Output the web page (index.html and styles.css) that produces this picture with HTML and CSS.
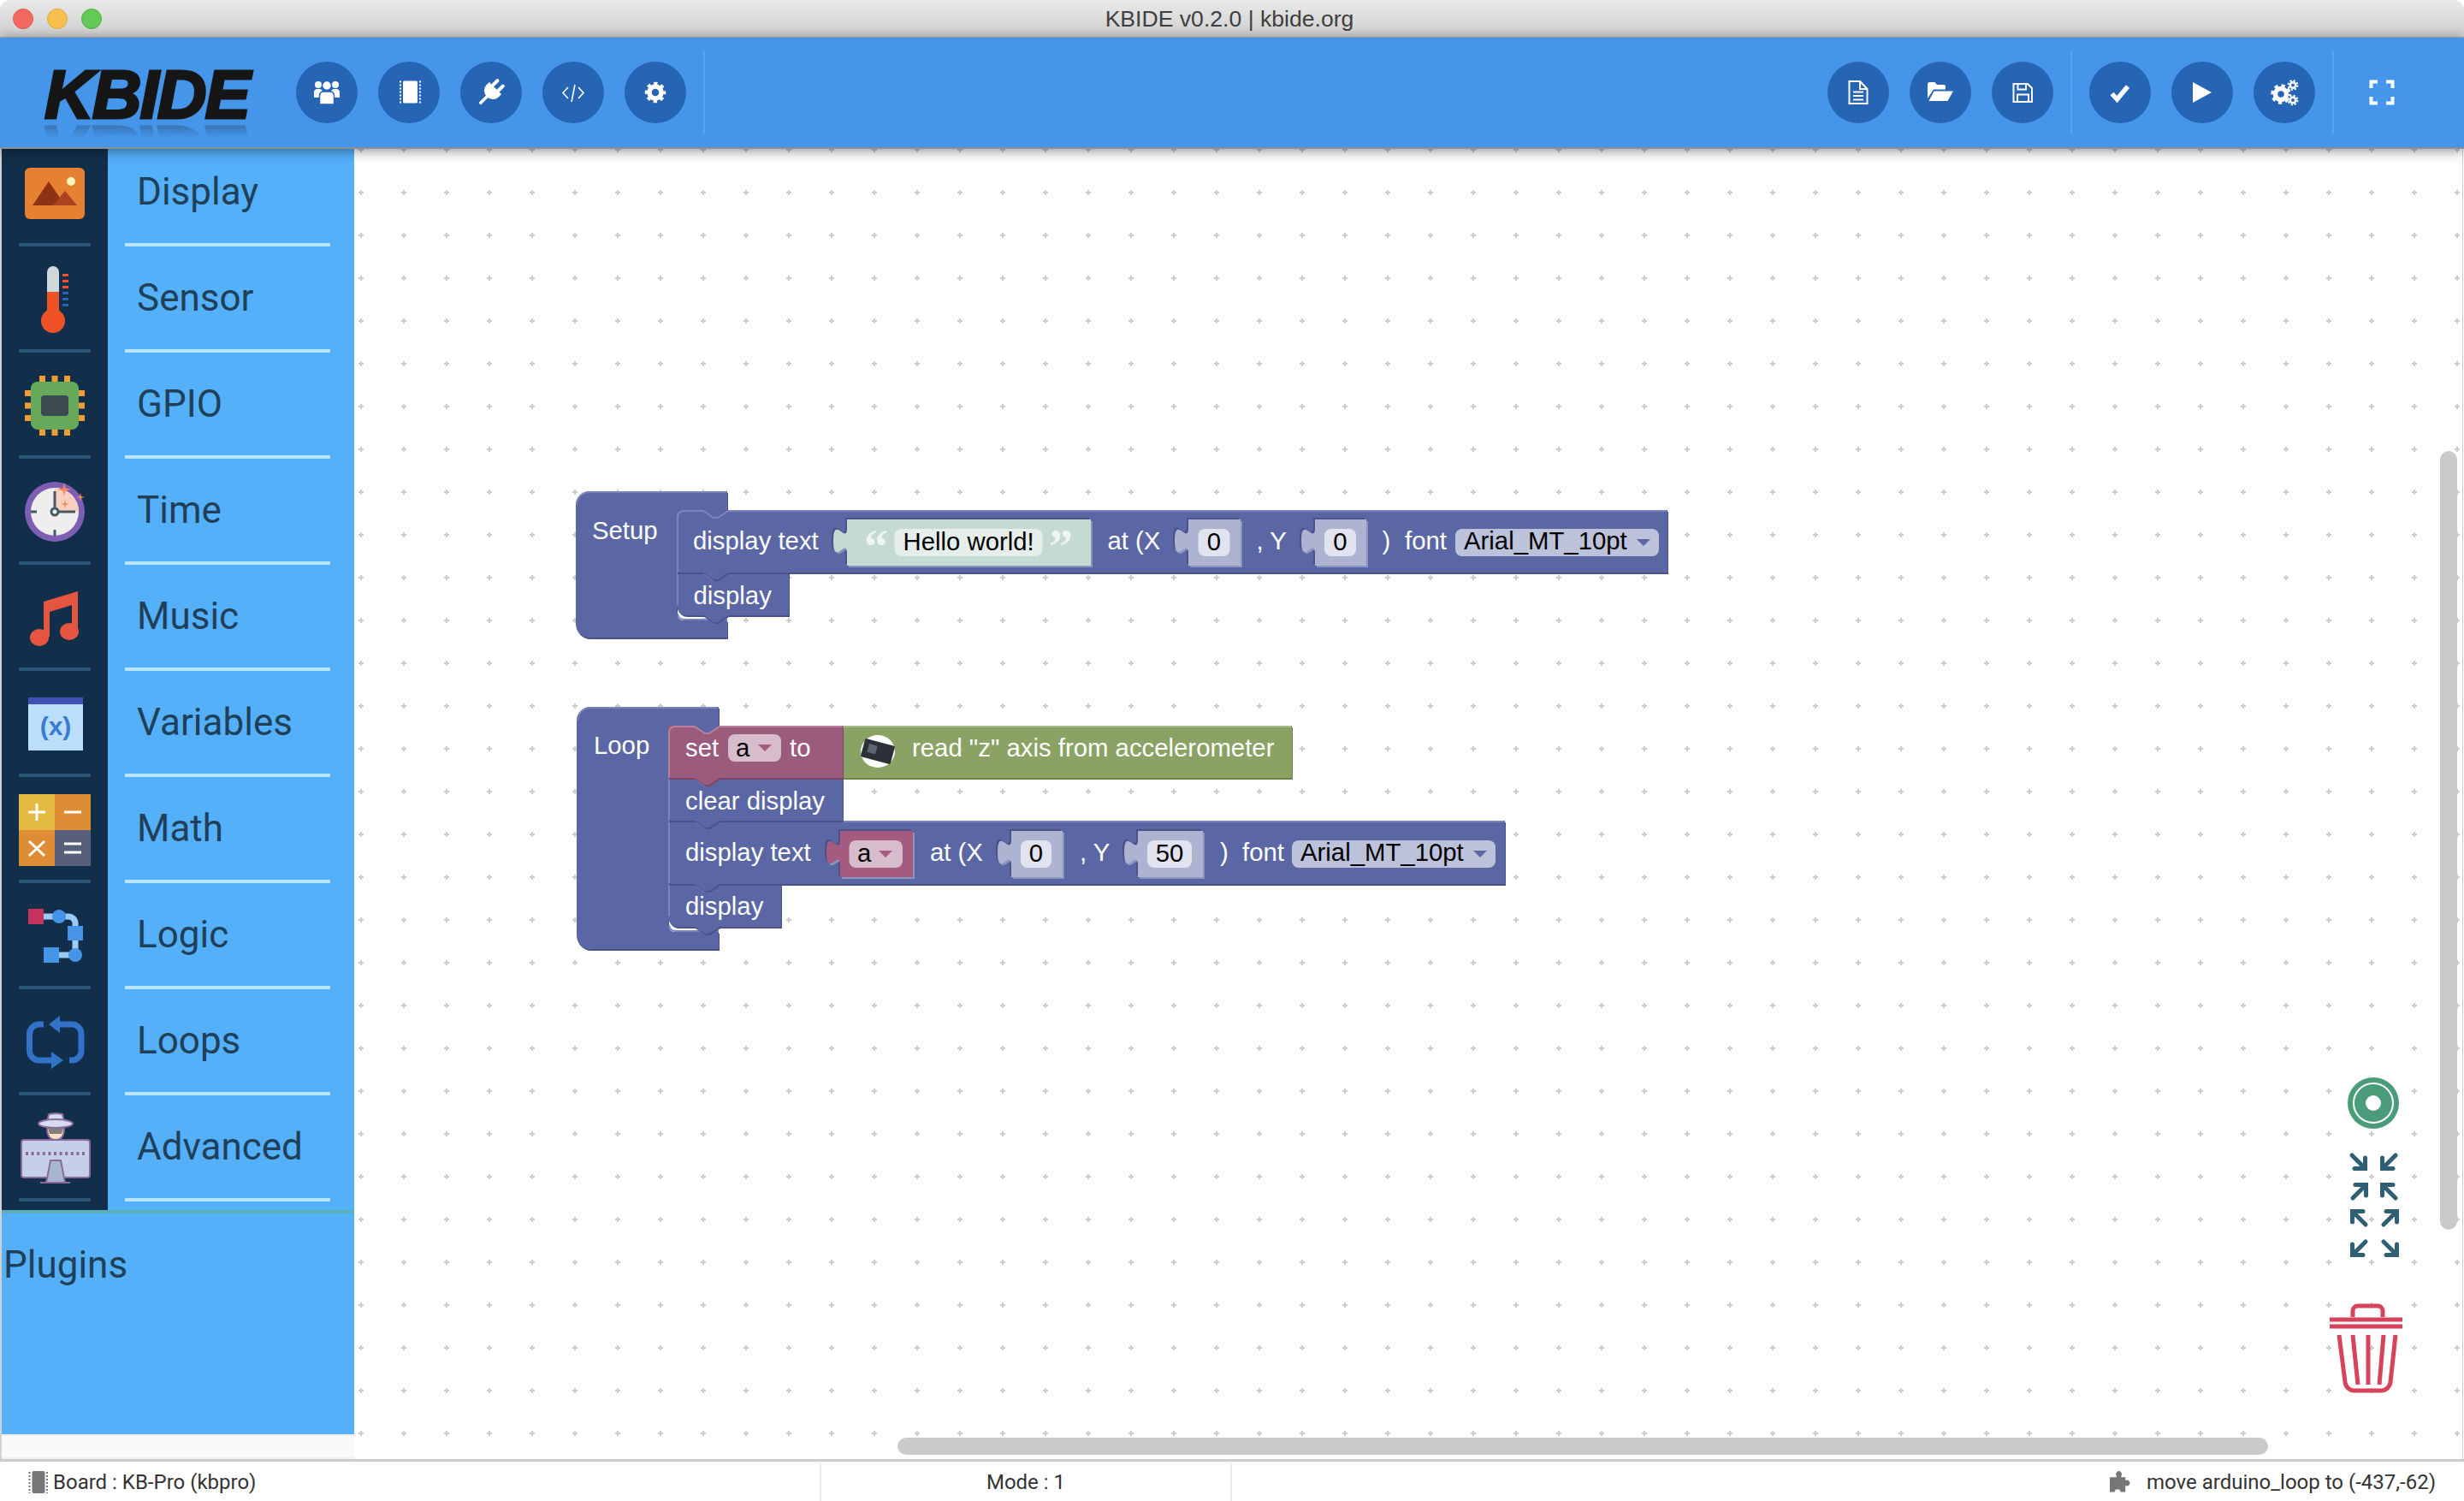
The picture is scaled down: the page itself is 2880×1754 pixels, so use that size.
FILE: index.html
```html
<!DOCTYPE html>
<html lang="en">
<head>
    <meta charset="UTF-8">
    <title>KBIDE v0.2.0 | kbide.org</title>
    <link rel="stylesheet" href="styles.css">
</head>
<body>
    <div class="titlebar">
        <div class="lights">
            <span class="light light-red"></span>
            <span class="light light-yellow"></span>
            <span class="light light-green"></span>
        </div>
        <div class="window-title">KBIDE v0.2.0 | kbide.org</div>
    </div>

    <div class="toolbar">
        <div class="logo-wrap"><div class="logo">KBIDE</div></div>

        <div class="tool-group">
            <div class="tool-btn">
                <svg class="tool-icon" viewBox="0 0 36 36">
                    <circle cx="8" cy="9" r="4"/><circle cx="28" cy="9" r="4"/>
                    <path d="M3,24 V18 q0,-4 4,-4 h2 q4,0 4,4 v6 Z M23,24 V18 q0,-4 4,-4 h2 q4,0 4,4 v6 Z"/>
                    <circle cx="18" cy="10" r="5.5" class="cut"/>
                    <path class="cut" d="M9.5,32 V22 q0,-5 5,-5 h7 q5,0 5,5 v10 Z"/>
                </svg>
            </div>
            <div class="tool-btn">
                <svg class="tool-icon" viewBox="0 0 36 36">
                    <rect x="11" y="4.500" width="17" height="26" rx="1.500"/>
                    <path class="line dotted" d="M8,4.500 V30.500 M31,4.500 V30.500"/>
                </svg>
            </div>
            <div class="tool-btn">
                <svg class="tool-icon" viewBox="0 0 36 36">
                    <g transform="rotate(45 18 18)">
                        <rect x="11.5" y="1" width="4" height="11" rx="2"/>
                        <rect x="20.5" y="1" width="4" height="11" rx="2"/>
                        <path d="M8,11 H28 V16 a10,9 0 0 1 -20,0 Z"/>
                        <rect x="16.2" y="24" width="3.6" height="13" rx="1"/>
                    </g>
                </svg>
            </div>
            <div class="tool-btn">
                <svg class="tool-icon" viewBox="0 0 36 36">
                    <path class="line thin" d="M12,12 L6,18.5 L12,25 M24,12 L30,18.5 L24,25 M20,9 L16,29"/>
                </svg>
            </div>
            <div class="tool-btn">
                <svg class="tool-icon" viewBox="0 0 36 36">
                    <circle class="gear-body" cx="18" cy="18" r="7"/>
                    <circle class="gear-teeth" cx="18" cy="18" r="10.5"/>
                </svg>
            </div>
        </div>

        <div class="tool-group tool-group-push">
            <div class="tool-btn">
                <svg class="tool-icon" viewBox="0 0 36 36">
                    <path class="line" d="M7.5,5 H20 L28.5,14 V31 H7.5 Z M20,5 V14 H28.5 M12,17.5 H24 M12,22 H24 M12,26.5 H24"/>
                </svg>
            </div>
            <div class="tool-btn">
                <svg class="tool-icon" viewBox="0 0 36 36">
                    <path d="M3,25 V8.5 q0,-2.5 2.5,-2.5 h6 l2.5,3 h8 q2,0 2,2 v3.5 H10 Z"/>
                    <path d="M10.5,16.5 H33 L26.5,28 H4.5 Z"/>
                </svg>
            </div>
            <div class="tool-btn">
                <svg class="tool-icon" viewBox="0 0 36 36">
                    <path class="line" d="M7.5,8 H24 L29,13 V29 H7.5 Z M12.5,8 V14.5 H22 V8 M12,29 V20.5 H25 V29"/>
                </svg>
            </div>
        </div>

        <div class="tool-group">
            <div class="tool-btn">
                <svg class="tool-icon" viewBox="0 0 36 36">
                    <path class="line thick" d="M8.5,19.5 L14.5,26 L27,11"/>
                </svg>
            </div>
            <div class="tool-btn">
                <svg class="tool-icon" viewBox="0 0 36 36">
                    <path d="M7,6 V30 L29,18 Z"/>
                </svg>
            </div>
            <div class="tool-btn">
                <svg class="tool-icon" viewBox="0 0 36 36">
                    <circle class="gear-body" cx="14" cy="20" r="6.5"/>
                    <circle class="gear-teeth" cx="14" cy="20" r="10"/>
                    <circle class="gear-small" cx="28" cy="9.5" r="3.2"/>
                    <circle class="gear-small-teeth" cx="28" cy="9.5" r="5.4"/>
                    <circle class="gear-small" cx="28" cy="27" r="3.2"/>
                    <circle class="gear-small-teeth" cx="28" cy="27" r="5.4"/>
                </svg>
            </div>
        </div>

        <div class="tool-group tool-group-last">
            <div class="tool-btn tool-btn-plain">
                <svg class="tool-icon" viewBox="0 0 36 36">
                    <path class="line wide" d="M5.5,13 V5.5 H13 M23,5.5 H30.5 V13 M5.5,23 V30.5 H13 M30.5,23 V30.5 H23"/>
                </svg>
            </div>
        </div>
    </div>

    <div class="main">
        <div class="sidebar">
            <div class="categories">
                <div class="cat">
                    <div class="cat-icon">
                        <svg class="cat-svg" viewBox="0 0 84 84">
                            <rect x="7" y="12" width="70" height="60" rx="6" fill="#e58130"/>
                            <path d="M16,56 L35,28 L54,56 Z" fill="#8e3214"/>
                            <path d="M40,56 L54,39 L68,56 Z" fill="#ab4320"/>
                            <circle cx="61" cy="28" r="5" fill="#fdf3bb"/>
                        </svg>
                    </div>
                    <div class="cat-label">Display</div>
                </div>
                <div class="cat">
                    <div class="cat-icon">
                        <svg class="cat-svg" viewBox="0 0 84 84">
                            <path d="M33,62 V10 a7,7 0 0 1 14,0 V62 Z" fill="#cfd8dc"/>
                            <path d="M33,33 H47 V56 H33 Z" fill="#f05228"/>
                            <circle cx="40" cy="67" r="14" fill="#f05228"/>
                            <path d="M51,12 h7 v3 h-7 Z M51,19 h7 v3 h-7 Z M51,26 h7 v3 h-7 Z" fill="#f05228"/>
                            <path d="M51,33 h7 v3 h-7 Z M51,40 h7 v3 h-7 Z M51,47 h7 v3 h-7 Z" fill="#2a62b5"/>
                        </svg>
                    </div>
                    <div class="cat-label">Sensor</div>
                </div>
                <div class="cat">
                    <div class="cat-icon">
                        <svg class="cat-svg" viewBox="0 0 84 84">
                            <path d="M24,7 h7 v70 h-7 Z M38.500,7 h7 v70 h-7 Z M53,7 h7 v70 h-7 Z M7,24 h70 v7 h-70 Z M7,38.500 h70 v7 h-70 Z M7,53 h70 v7 h-70 Z" fill="#f09c33"/>
                            <rect x="14" y="14" width="56" height="56" rx="8" fill="#66a95a"/>
                            <rect x="26" y="30" width="32" height="24" rx="4" fill="#3e4a52"/>
                        </svg>
                    </div>
                    <div class="cat-label">GPIO</div>
                </div>
                <div class="cat">
                    <div class="cat-icon">
                        <svg class="cat-svg" viewBox="0 0 84 84">
                            <circle cx="42" cy="42" r="35" fill="#7e5eb5"/>
                            <circle cx="42" cy="42" r="28" fill="#eeeeee"/>
                            <path d="M42,42 V14 A28,28 0 0 1 70,42 Z" fill="#f9cfc0"/>
                            <path d="M42,42 V18 M42,42 H66 M14,42 H21 M42,63 V70" stroke="#455a64" stroke-width="3" fill="none"/>
                            <circle cx="42" cy="42" r="4" fill="#eeeeee" stroke="#455a64" stroke-width="3"/>
                            <path d="M53,8 l1.500,6.500 6.500,1.500 -6.500,1.500 -1.500,6.500 -1.500,-6.500 -6.500,-1.500 6.500,-1.500 Z M72,20 l1,4 4,1 -4,1 -1,4 -1,-4 -4,-1 4,-1 Z M54,28 l1,4 4,1 -4,1 -1,4 -1,-4 -4,-1 4,-1 Z" fill="#f08a5b"/>
                        </svg>
                    </div>
                    <div class="cat-label">Time</div>
                </div>
                <div class="cat">
                    <div class="cat-icon">
                        <svg class="cat-svg" viewBox="0 0 84 84">
                            <path d="M29,23 L69,11 V57 h-7 V27 L36,35 V64 h-7 Z" fill="#e65540"/>
                            <ellipse cx="24" cy="65" rx="11" ry="10" fill="#e65540"/>
                            <ellipse cx="59" cy="58" rx="11" ry="10" fill="#e65540"/>
                        </svg>
                    </div>
                    <div class="cat-label">Music</div>
                </div>
                <div class="cat">
                    <div class="cat-icon">
                        <svg class="cat-svg" viewBox="0 0 84 84">
                            <rect x="11" y="11" width="64" height="62" fill="#bbdefb"/>
                            <rect x="11" y="11" width="64" height="8" fill="#3f51b5"/>
                            <text class="var-glyph" x="43" y="55">(x)</text>
                        </svg>
                    </div>
                    <div class="cat-label">Variables</div>
                </div>
                <div class="cat">
                    <div class="cat-icon">
                        <svg class="cat-svg" viewBox="0 0 84 84">
                            <rect width="42" height="42" fill="#e3b942"/>
                            <rect x="42" width="42" height="42" fill="#de8d35"/>
                            <rect y="42" width="42" height="42" fill="#de8d35"/>
                            <rect x="42" y="42" width="42" height="42" fill="#585f7a"/>
                            <path d="M21,11 V31 M11,21 H31 M53,21 H73 M12,55 L30,72 M30,55 L12,72 M53,58 H73 M53,68 H73" stroke="#fff" stroke-width="3" fill="none"/>
                        </svg>
                    </div>
                    <div class="cat-label">Math</div>
                </div>
                <div class="cat">
                    <div class="cat-icon">
                        <svg class="cat-svg" viewBox="0 0 84 84">
                            <path d="M29,19 H58 a8,8 0 0 1 8,8 V64 H47" stroke="#9ccaf5" stroke-width="7" fill="none"/>
                            <rect x="11" y="10" width="18" height="18" fill="#c8325e"/>
                            <circle cx="47" cy="19" r="8" fill="#4594e8"/>
                            <rect x="57" y="30" width="18" height="17" fill="#4594e8"/>
                            <circle cx="66" cy="64" r="8" fill="#4594e8"/>
                            <rect x="29" y="55" width="18" height="18" fill="#4594e8"/>
                        </svg>
                    </div>
                    <div class="cat-label">Logic</div>
                </div>
                <div class="cat">
                    <div class="cat-icon">
                        <svg class="cat-svg" viewBox="0 0 84 84">
                            <path d="M48,21 H62 a11,11 0 0 1 11,11 V52 a11,11 0 0 1 -11,11 H59 M29,21 H24 a11.500,11.500 0 0 0 -11.500,11.500 V52 a11,11 0 0 0 11,11 H38" stroke="#3273c8" stroke-width="7" fill="none"/>
                            <path d="M35,21 L48,11 V31 Z M52,63 L38,53 V73 Z" fill="#3273c8"/>
                        </svg>
                    </div>
                    <div class="cat-label">Loops</div>
                </div>
                <div class="cat">
                    <div class="cat-icon">
                        <svg class="cat-svg" viewBox="0 0 84 84">
                            <path d="M33,18 q0,14 10,14 q10,0 10,-14 Z" fill="#ffe0c0" stroke="#8a6a9a" stroke-width="2"/>
                            <path d="M34,18 H52 L50,25 H36 Z" fill="#7f7f7f"/>
                            <path d="M33,11 L35,2 Q43,0 51,2 L53,11 Z" fill="#d5dbf0" stroke="#8a6a9a" stroke-width="2"/>
                            <ellipse cx="43" cy="13" rx="20" ry="5" fill="#d5dbf0" stroke="#8a6a9a" stroke-width="2"/>
                            <rect x="3" y="32" width="80" height="44" rx="3" fill="#c5cfe8" stroke="#8a6a9a" stroke-width="2"/>
                            <path d="M8,48 H78" stroke="#8a6a9a" stroke-width="4" stroke-dasharray="3 3.600" fill="none"/>
                            <path d="M37,56 H49 L54,82 H32 Z" fill="#a9b6d0" stroke="#8a6a9a" stroke-width="2"/>
                            <path d="M25,82 H60" stroke="#8a6a9a" stroke-width="2" fill="none"/>
                        </svg>
                    </div>
                    <div class="cat-label">Advanced</div>
                </div>
            </div>
            <div class="plugins">
                <div class="plugins-label">Plugins</div>
            </div>
            <div class="flyout-track"></div>
        </div>

        <div class="workspace">
            <svg class="workspace-svg" viewBox="414 174 2464 1531">
                <defs>
                    <pattern id="grid" width="50" height="50" patternUnits="userSpaceOnUse">
                        <path d="M19,25 H25 M22,22 V28" stroke="#cccccc" stroke-width="2"/>
                    </pattern>

                    <!-- setup stack -->
                    <path id="setup-c" d="M673,590 a16,16 0 0 1 16,-16 H850 V596 l-11,8 h-5 l-12,-8 H799 a8,8 0 0 0 -8,8 V717 a8,8 0 0 0 8,8 H850 V745 H689 a16,16 0 0 1 -16,-16 Z"/>
                    <path id="setup-text" d="M791,596 H822 l12,8 h5 l12,-8 H1949 V669 H851 l-12,8 h-5 l-12,-8 H791 Z"/>
                    <path id="setup-disp" d="M791,669 H822 l12,8 h5 l12,-8 H922 V719 H851 l-12,8 h-5 l-12,-8 H803 a12,12 0 0 1 -12,-12 Z"/>

                    <!-- loop stack -->
                    <path id="loop-c" d="M674,842 a16,16 0 0 1 16,-16 H840 V848 l-11,8 h-5 l-12,-8 H789 a8,8 0 0 0 -8,8 V1081 a8,8 0 0 0 8,8 H840 V1109 H690 a16,16 0 0 1 -16,-16 Z"/>
                    <path id="loop-set" d="M781,848 H812 l12,8 h5 l12,-8 H985 V909 H841 l-12,8 h-5 l-12,-8 H781 Z"/>
                    <path id="loop-read" d="M985,848 H1510 V909 H985 V888 c0,-20 -16,16 -16,-15 s16,5 16,-15 Z"/>
                    <path id="loop-clear" d="M781,909 H812 l12,8 h5 l12,-8 H985 V959 H841 l-12,8 h-5 l-12,-8 H781 Z"/>
                    <path id="loop-text" d="M781,959 H812 l12,8 h5 l12,-8 H1759 V1033 H841 l-12,8 h-5 l-12,-8 H781 Z"/>
                    <path id="loop-disp" d="M781,1033 H812 l12,8 h5 l12,-8 H913 V1083 H841 l-12,8 h-5 l-12,-8 H793 a12,12 0 0 1 -12,-12 Z"/>

                    <!-- value inputs -->
                    <path id="in-hello" d="M990,607 H1275 V661 H990 V647 c0,-20 -16,16 -16,-15 s16,5 16,-15 Z"/>
                    <path id="in-x1" d="M1389,607 H1450 V661 H1389 V647 c0,-20 -16,16 -16,-15 s16,5 16,-15 Z"/>
                    <path id="in-y1" d="M1537,607 H1597 V661 H1537 V647 c0,-20 -16,16 -16,-15 s16,5 16,-15 Z"/>
                    <path id="in-a" d="M982,971 H1067 V1025 H982 V1011 c0,-20 -16,16 -16,-15 s16,5 16,-15 Z"/>
                    <path id="in-x2" d="M1182,971 H1242 V1025 H1182 V1011 c0,-20 -16,16 -16,-15 s16,5 16,-15 Z"/>
                    <path id="in-y2" d="M1330,971 H1406 V1025 H1330 V1011 c0,-20 -16,16 -16,-15 s16,5 16,-15 Z"/>

                    <path id="arrow" d="M-18,-18 L-4,-4 M-2.500,-15 V-2.500 H-15"/>
                </defs>

                <rect x="414" y="174" width="2464" height="1531" fill="#ffffff"/>
                <rect x="414" y="174" width="2464" height="1531" fill="url(#grid)"/>

                <!-- Setup -->
                <g class="blk-blue">
                    <use href="#setup-c" class="shade" x="1" y="2"/><use href="#setup-c" class="body"/>
                    <path class="edge" d="M674,590 a15,15 0 0 1 15,-15 H849 M792,717 a8,8 0 0 0 7,7 H850"/>
                    <use href="#setup-disp" class="shade" x="1" y="2"/><use href="#setup-disp" class="body"/>
                    <path class="edge" d="M792,707 V670 H822 l12,8 h5 l12,-8 H921"/>
                    <text class="b-txt" x="810.500" y="706">display</text>
                    <use href="#setup-text" class="shade" x="1" y="2"/><use href="#setup-text" class="body"/>
                    <path class="edge" d="M792,668 V604 a7,7 0 0 1 7,-7 H822 l12,8 h5 l12,-8 H1948"/>
                    <text class="b-txt" x="692" y="630">Setup</text>
                    <text class="b-txt" x="810" y="642">display text</text>
                    <text class="b-txt" x="1294.500" y="642">at (X</text>
                    <text class="b-txt" x="1468.500" y="642">, Y</text>
                    <text class="b-txt" x="1615.500" y="642">)</text>
                    <text class="b-txt" x="1642" y="642">font</text>
                </g>
                <g class="slot">
                    <use href="#in-hello" class="slot-dark" x="-2" y="-2"/><use href="#in-hello" class="slot-light" x="2" y="2"/>
                    <use href="#in-hello" fill="#c5dad1"/>
                    <rect class="field field-str" x="1045.500" y="618" width="173" height="32" rx="8"/>
                    <text class="b-val" x="1055.500" y="643">Hello world!</text>
                    <text class="quote" x="1010" y="658">“</text>
                    <text class="quote" x="1226" y="658">”</text>
                    <use href="#in-x1" class="slot-dark" x="-2" y="-2"/><use href="#in-x1" class="slot-light" x="2" y="2"/>
                    <use href="#in-x1" fill="#adb3d1"/>
                    <rect class="field field-num" x="1400.500" y="618" width="37" height="32" rx="8"/>
                    <text class="b-val b-mid" x="1419" y="643">0</text>
                    <use href="#in-y1" class="slot-dark" x="-2" y="-2"/><use href="#in-y1" class="slot-light" x="2" y="2"/>
                    <use href="#in-y1" fill="#adb3d1"/>
                    <rect class="field field-num" x="1548" y="618" width="37" height="32" rx="8"/>
                    <text class="b-val b-mid" x="1566.500" y="643">0</text>
                </g>
                <rect class="field field-drop" x="1701" y="618" width="238" height="32" rx="8"/>
                <text class="b-val" x="1711" y="642">Arial_MT_10pt</text>
                <path class="drop-arrow" d="M1913,630 H1929 L1921,638 Z"/>

                <!-- Loop -->
                <g class="blk-blue">
                    <use href="#loop-c" class="shade" x="1" y="2"/><use href="#loop-c" class="body"/>
                    <path class="edge" d="M675,842 a15,15 0 0 1 15,-15 H839 M782,1081 a8,8 0 0 0 7,7 H840"/>
                    <use href="#loop-disp" class="shade" x="1" y="2"/><use href="#loop-disp" class="body"/>
                    <path class="edge" d="M782,1071 V1034 H812 l12,8 h5 l12,-8 H912"/>
                    <text class="b-txt" x="801" y="1069">display</text>
                    <use href="#loop-text" class="shade" x="1" y="2"/><use href="#loop-text" class="body"/>
                    <path class="edge" d="M782,1032 V960 H812 l12,8 h5 l12,-8 H1758"/>
                    <text class="b-txt" x="801" y="1006">display text</text>
                    <text class="b-txt" x="1087" y="1006">at (X</text>
                    <text class="b-txt" x="1262" y="1006">, Y</text>
                    <text class="b-txt" x="1426" y="1006">)</text>
                    <text class="b-txt" x="1452" y="1006">font</text>
                    <use href="#loop-clear" class="shade" x="1" y="2"/><use href="#loop-clear" class="body"/>
                    <path class="edge" d="M782,958 V910 H812 l12,8 h5 l12,-8 H984"/>
                    <text class="b-txt" x="801" y="946">clear display</text>
                    <text class="b-txt" x="694" y="881">Loop</text>
                </g>
                <g class="slot">
                    <use href="#in-x2" class="slot-dark" x="-2" y="-2"/><use href="#in-x2" class="slot-light" x="2" y="2"/>
                    <use href="#in-x2" fill="#adb3d1"/>
                    <rect class="field field-num" x="1193" y="982" width="36" height="32" rx="8"/>
                    <text class="b-val b-mid" x="1211" y="1007">0</text>
                    <use href="#in-y2" class="slot-dark" x="-2" y="-2"/><use href="#in-y2" class="slot-light" x="2" y="2"/>
                    <use href="#in-y2" fill="#adb3d1"/>
                    <rect class="field field-num" x="1341" y="982" width="52" height="32" rx="8"/>
                    <text class="b-val b-mid" x="1367" y="1007">50</text>
                    <use href="#in-a" class="slot-dark" x="-2" y="-2"/><use href="#in-a" class="slot-light" x="2" y="2"/>
                    <use href="#in-a" fill="#a55b80"/>
                </g>
                <rect class="field field-var" x="992.500" y="982" width="62.500" height="32" rx="8"/>
                <text class="b-val" x="1002" y="1007">a</text>
                <path class="drop-arrow-var" d="M1027,994 H1043 L1035,1002 Z"/>
                <rect class="field field-drop" x="1510" y="982" width="238" height="32" rx="8"/>
                <text class="b-val" x="1520" y="1006">Arial_MT_10pt</text>
                <path class="drop-arrow" d="M1722,994 H1738 L1730,1002 Z"/>

                <g class="blk-green">
                    <use href="#loop-read" class="shade" x="1" y="2"/><use href="#loop-read" class="body"/>
                    <path class="edge" d="M986,849 H1509"/>
                    <ellipse cx="1026" cy="878" rx="20" ry="19" fill="#ffffff"/>
                    <rect x="1008" y="867" width="36" height="22" rx="2" fill="#2c3138" transform="rotate(15 1026 878)"/>
                    <rect x="1014" y="872" width="10" height="10" fill="#5d6670" transform="rotate(15 1026 878)"/>
                    <text class="b-txt" x="1066" y="884">read "z" axis from accelerometer</text>
                </g>
                <g class="blk-purple">
                    <use href="#loop-set" class="shade" x="1" y="2"/><use href="#loop-set" class="body"/>
                    <path class="edge" d="M782,908 V856 a7,7 0 0 1 7,-7 H812 l12,8 h5 l12,-8 H984"/>
                    <text class="b-txt" x="801" y="884">set</text>
                    <text class="b-txt" x="923" y="884">to</text>
                </g>
                <rect class="field field-var" x="851" y="858" width="62" height="32" rx="8"/>
                <text class="b-val" x="860" y="884">a</text>
                <path class="drop-arrow-var" d="M886,870 H902 L894,878 Z"/>

                <!-- workspace controls -->
                <circle cx="2774" cy="1289" r="30" fill="#4a9d78"/>
                <circle cx="2774" cy="1289" r="23" fill="none" stroke="#ffffff" stroke-width="2"/>
                <circle cx="2774" cy="1289" r="9" fill="#ffffff"/>

                <g class="zoom-arrows">
                    <use href="#arrow" transform="translate(2767 1368)"/>
                    <use href="#arrow" transform="translate(2782 1368) scale(-1 1)"/>
                    <use href="#arrow" transform="translate(2768 1382) scale(1 -1)"/>
                    <use href="#arrow" transform="translate(2782 1382) scale(-1 -1)"/>
                    <use href="#arrow" transform="translate(2747 1413) scale(-1 -1)"/>
                    <use href="#arrow" transform="translate(2804 1413) scale(1 -1)"/>
                    <use href="#arrow" transform="translate(2747 1469) scale(-1 1)"/>
                    <use href="#arrow" transform="translate(2804 1469)"/>
                </g>

                <g class="trash">
                    <path d="M2723,1542 H2808 M2723,1550 H2808" />
                    <path d="M2750,1539 V1532 a6,6 0 0 1 6,-6 H2779 a6,6 0 0 1 6,6 V1539"/>
                    <path d="M2734,1560 L2741,1615 a11,11 0 0 0 11,10 H2783 a11,11 0 0 0 11,-10 L2800,1560"/>
                    <path d="M2750,1560 L2756,1618 M2768,1560 V1618 M2786,1560 L2781,1618"/>
                </g>

                <rect class="scroll" x="2852" y="527" width="20" height="910" rx="10"/>
                <rect class="scroll" x="1049" y="1680" width="1602" height="20" rx="10"/>
            </svg>
        </div>
    </div>

    <div class="statusbar">
        <div class="status-left">
            <svg class="status-icon" viewBox="0 0 24 26">
                <rect x="5" y="0" width="15" height="26" rx="2" fill="#777777"/>
                <path d="M2,1 V26 M22.500,1 V26" stroke="#777777" stroke-width="2" stroke-dasharray="2 2" fill="none"/>
            </svg>
            <span>Board : KB-Pro (kbpro)</span>
        </div>
        <div class="status-mid">Mode : 1</div>
        <div class="status-right">
            <svg class="status-icon" viewBox="0 0 26 26">
                <path d="M0,7 H8 V5 a3.500,3.500 0 1 1 6,0 V7 H19 V11 a3.500,3.500 0 1 1 0,6 V25 H13 a3.500,3.500 0 1 0 -7,0 H0 Z" fill="#777777"/>
            </svg>
            <span>move arduino_loop to (-437,-62)</span>
        </div>
    </div>
</body>
</html>
```
FILE: styles.css
```css
* {
    margin: 0;
    padding: 0;
    box-sizing: border-box;
}

html, body {
    width: 2880px;
    height: 1754px;
    overflow: hidden;
    background: #ffffff;
}

body {
    display: flex;
    flex-direction: column;
    font-family: Roboto, sans-serif;
}

/* window chrome */
.titlebar {
    height: 44px;
    flex: none;
    position: relative;
    display: flex;
    align-items: center;
    justify-content: center;
    background: linear-gradient(#e9e9e9, #cfcfcf);
    border-bottom: 1px solid #b5b5b5;
    border-radius: 12px 12px 0 0;
}

.lights {
    position: absolute;
    left: 15px;
    top: 10px;
    display: flex;
    gap: 16px;
}

.light {
    width: 24px;
    height: 24px;
    border-radius: 50%;
}

.light-red { background: #f4695f; border: 1px solid #dc5a50; }
.light-yellow { background: #f7c04c; border: 1px solid #dea63a; }
.light-green { background: #63c957; border: 1px solid #52ae47; }

.window-title {
    font-family: "Liberation Sans", sans-serif;
    font-size: 26.6px;
    color: #3f3f3f;
    margin: 2px 0 0 -6px;
}

/* toolbar */
.toolbar {
    height: 130px;
    flex: none;
    display: flex;
    align-items: center;
    background: #4595ea;
    border-bottom: 2px solid #8b8f96;
    box-shadow: 0 2px 14px rgba(0, 0, 0, 0.45);
    position: relative;
    z-index: 5;
}

.logo-wrap {
    width: 326px;
    padding: 6px 0 0 52px;
}

.logo {
    font-family: "Liberation Sans", sans-serif;
    font-weight: 700;
    font-style: italic;
    font-size: 80px;
    line-height: 70px;
    letter-spacing: -2px;
    color: #161616;
    -webkit-text-stroke: 3px #161616;
    -webkit-box-reflect: below -6px linear-gradient(transparent 70%, rgba(0, 0, 0, 0.35));
}

.tool-group {
    display: flex;
    align-items: center;
    gap: 24px;
    height: 96px;
    padding: 0 20px;
    border-right: 2px solid rgba(255, 255, 255, 0.13);
}

.tool-group-push {
    margin-left: auto;
}

.tool-group-last {
    border-right: none;
    padding-right: 60px;
}

.tool-btn {
    width: 72px;
    height: 72px;
    border-radius: 50%;
    background: #2664b4;
    display: flex;
    align-items: center;
    justify-content: center;
}

.tool-btn-plain {
    background: none;
}

.tool-icon {
    width: 36px;
    height: 36px;
    fill: #ffffff;
}

.tool-icon .cut {
    stroke: #2664b4;
    stroke-width: 1.5;
}

.tool-icon .line {
    fill: none;
    stroke: #ffffff;
    stroke-width: 2;
}

.tool-icon .thin { stroke-width: 1.6; }
.tool-icon .thick { stroke-width: 5.5; }
.tool-icon .wide { stroke-width: 4; }
.tool-icon .dotted { stroke-dasharray: 2 2; }

.gear-body {
    fill: none;
    stroke: #ffffff;
    stroke-width: 5.5;
}

.gear-teeth {
    fill: none;
    stroke: #ffffff;
    stroke-width: 3.5;
    stroke-dasharray: 4.2 4.05;
    stroke-dashoffset: 2.1;
}

.gear-small {
    fill: none;
    stroke: #ffffff;
    stroke-width: 2.5;
}

.gear-small-teeth {
    fill: none;
    stroke: #ffffff;
    stroke-width: 2;
    stroke-dasharray: 2.1 2.14;
}

/* main area */
.main {
    flex: 1;
    display: flex;
    min-height: 0;
    border-bottom: 3px solid #cccccc;
}

.sidebar {
    width: 414px;
    flex: none;
    display: flex;
    flex-direction: column;
    border-left: 2px solid #d2d2d2;
}

.categories {
    flex: none;
    display: flex;
    flex-direction: column;
    background: #55b0fa;
}

.cat {
    height: 124px;
    display: flex;
}

.cat-icon {
    width: 124px;
    background: #112f4a;
    display: flex;
    flex-direction: column;
    align-items: center;
    padding-top: 10px;
}

.cat-icon::after {
    content: '';
    width: 84px;
    height: 4px;
    margin-top: 16px;
    background: #2a5578;
}

.cat-svg {
    width: 84px;
    height: 84px;
    overflow: visible;
}

.var-glyph {
    font-family: "Liberation Sans", sans-serif;
    font-weight: 700;
    font-size: 30px;
    text-anchor: middle;
    fill: #3a7bd0;
}

.cat-label {
    flex: 1;
    margin: 0 28px 0 20px;
    height: 114px;
    border-bottom: 4px solid #b3e5fc;
    padding: 17px 0 0 14px;
    font-size: 44px;
    line-height: 66px;
    color: #1f4058;
}

.plugins {
    flex: 1;
    background: #55b0fa;
    border-top: 4px solid #5aafb8;
    padding: 29px 0 0 2px;
}

.plugins-label {
    font-size: 44px;
    line-height: 62px;
    color: #1f4058;
}

.flyout-track {
    height: 29px;
    flex: none;
    background: #f9f9f9;
    border-top: 2px solid #efefef;
    border-bottom: 2px solid #efefef;
}

.workspace {
    flex: 1;
    min-width: 0;
    margin-right: 1px;
    border-right: 2px solid #cccccc;
}

.workspace-svg {
    display: block;
    width: 2464px;
    height: 1531px;
}

/* blocks */
.blk-blue .body { fill: #5b67a5; }
.blk-blue .shade { fill: #49538a; }
.blk-blue .edge { fill: none; stroke: #7b86b8; stroke-width: 2; }

.blk-green .body { fill: #8aa364; }
.blk-green .shade { fill: #6e8549; }
.blk-green .edge { fill: none; stroke: #a9bd8c; stroke-width: 2; }

.blk-purple .body { fill: #9b5b7d; }
.blk-purple .shade { fill: #7d4563; }
.blk-purple .edge { fill: none; stroke: #b8819d; stroke-width: 2; }

.slot-dark { fill: #49538a; }
.slot-light { fill: #8c95c0; }

.b-txt {
    font-family: "Liberation Sans", sans-serif;
    font-size: 29.33px;
    fill: #ffffff;
}

.b-val {
    font-family: "Liberation Sans", sans-serif;
    font-size: 29.33px;
    fill: #000000;
}

.b-mid {
    text-anchor: middle;
}

.quote {
    font-family: "Liberation Serif", serif;
    font-weight: 700;
    font-size: 56px;
    fill: rgba(255, 255, 255, 0.7);
}

.field-str { fill: #e5eeea; }
.field-num { fill: #e1e4ef; }
.field-drop { fill: #bdc2db; }
.field-var { fill: #d7bdcc; }

.drop-arrow { fill: #5b67a5; }
.drop-arrow-var { fill: #a55b80; }

/* workspace controls */
.zoom-arrows {
    fill: none;
    stroke: #2f5f73;
    stroke-width: 5;
    stroke-linecap: round;
}

.trash path {
    fill: none;
    stroke: #d8435c;
    stroke-width: 5;
}

.scroll {
    fill: #cacaca;
}

/* status bar */
.statusbar {
    height: 46px;
    flex: none;
    display: flex;
    align-items: center;
    font-size: 24px;
    color: #333333;
    padding-top: 1px;
}

.status-left {
    width: 958px;
    padding-left: 32px;
    display: flex;
    align-items: center;
    gap: 5px;
}

.status-mid {
    width: 482px;
    height: 100%;
    display: flex;
    align-items: center;
    justify-content: center;
    border-left: 2px solid #ececec;
    border-right: 2px solid #ececec;
}

.status-right {
    flex: 1;
    padding-right: 33px;
    display: flex;
    align-items: center;
    justify-content: flex-end;
    gap: 18px;
}

.status-icon {
    width: 25px;
    height: 26px;
    flex: none;
}
```
